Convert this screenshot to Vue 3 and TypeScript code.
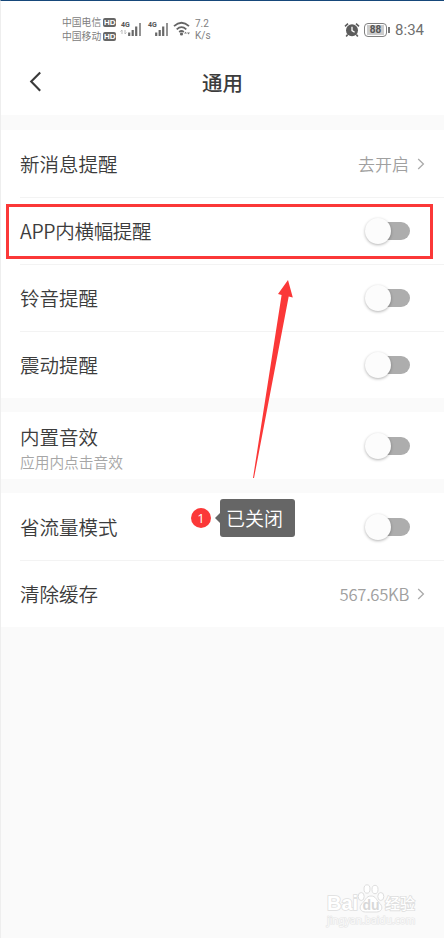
<script setup lang="ts">
interface Row {
  label: string
  note?: string
  value?: string
}

const sections: Row[][] = [
  [
    { label: '新消息提醒', value: '去开启' },
    { label: 'APP内横幅提醒' },
    { label: '铃音提醒' },
    { label: '震动提醒' },
  ],
  [{ label: '内置音效', note: '应用内点击音效' }],
  [{ label: '省流量模式' }, { label: '清除缓存', value: '567.65KB' }],
]

const carriers: string[] = ['中国电信', '中国移动']
const networks: number[] = [1, 2]
</script>

<template>
  <div class="screen">
    <header class="status">
      <div class="carriers">
        <div v-for="c in carriers" :key="c" class="carrier">
          <span>{{ c }}</span><b class="hd">HD</b>
        </div>
      </div>
      <div v-for="n in networks" :key="n" class="network">
        <span class="gen">4G</span>
        <svg width="24" height="18" viewBox="0 0 24 18">
          <path v-if="n === 1" d="M3 11v4M1.5 12.5L3 11M6 11v4M7.5 13.5L6 15" stroke="#bbb" stroke-width="1" fill="none" />
          <path d="M10.2 13.5v3.5M13.7 11v6M17.2 7.5v9.5" stroke="#686868" stroke-width="2.2" />
          <path d="M21 4V17" stroke="#888" stroke-width="1.8" />
        </svg>
      </div>
      <svg class="wifi" width="18" height="16" viewBox="0 0 18 16">
        <g fill="none" stroke="#656565" stroke-width="1.8">
          <path d="M1 5.2Q8.5-1.6 16 5.2M3.7 8.3Q8.5 4 13.3 8.3M6.2 11Q8.5 9 10.8 11" />
        </g>
        <circle cx="8.5" cy="13" r="1.6" fill="#656565" />
        <path d="M11 12.5l1.6-1.8 1.4 1.8zM14 11.5h3l-1.5 2z" fill="#777" />
      </svg>
      <div class="speed"><span>7.2</span><span>K/s</span></div>
      <div class="right">
        <svg width="16" height="16" viewBox="0 0 16 16">
          <circle cx="8" cy="8.2" r="6" fill="#5c5c5c" />
          <path d="M1 4.3L4 1.7M15 4.3L12 1.7M3.7 12.5L2.2 14.5M12.3 12.5l1.5 2" stroke="#5c5c5c" stroke-width="1.6" />
          <path d="M8 4.8v3.8l2.6 1.6" stroke="#fff" stroke-width="1.3" fill="none" />
        </svg>
        <div class="battery"><span>88</span></div>
        <i class="tip"></i>
        <span class="time">8:34</span>
      </div>
    </header>

    <nav class="title-bar">
      <svg width="14" height="22" viewBox="0 0 14 22">
        <path d="M12.2 1.5L3.2 10.5l9 9.2" fill="none" stroke="#3a3a3a" stroke-width="2.1" />
      </svg>
      <h1>通用</h1>
    </nav>

    <main>
      <section v-for="(rows, i) in sections" :key="i" class="group">
        <div v-for="row in rows" :key="row.label" class="row" :class="{ latin: row.label.startsWith('APP') }">
          <div class="text" :class="{ double: row.note }">
            <span class="label">{{ row.label }}</span>
            <span v-if="row.note" class="note">{{ row.note }}</span>
          </div>
          <div v-if="row.value" class="value">
            <span :class="{ size: row.value.endsWith('KB') }">{{ row.value }}</span>
            <svg width="8" height="12" viewBox="0 0 8 12">
              <path d="M1.2 1L6.4 6l-5.2 5" fill="none" stroke="#aaa" stroke-width="1.3" />
            </svg>
          </div>
          <div v-else class="toggle"><i class="knob"></i></div>
        </div>
      </section>
    </main>

    <div class="frame"></div>
    <svg class="pointer" width="44" height="202" viewBox="0 0 44 202">
      <path d="M36 1L40.8 18.4 36.7 17.4 2 199H1L29.6 16 26 15z" fill="#fb3838" />
    </svg>
    <div class="marker">1</div>
    <div class="tag">已关闭</div>

    <div class="watermark">
      <div class="brand">
        <span class="bai">Bai</span>
        <svg width="28" height="29" viewBox="0 0 28 29">
          <g fill="#fff" stroke="#dedede" stroke-width="1">
            <ellipse cx="4.2" cy="12.5" rx="3" ry="4" />
            <ellipse cx="10" cy="5" rx="3" ry="4.2" />
            <ellipse cx="18" cy="5.5" rx="3" ry="4.2" />
            <ellipse cx="23.8" cy="12.5" rx="3" ry="4" />
            <path d="M14 12c-5 0-5 4-9 7.5C1 24 4 28 8.5 28h11C24 28 27 24 23 19.5 19 16 19 12 14 12z" />
          </g>
          <text x="14" y="25.5" text-anchor="middle">du</text>
        </svg>
        <span class="jy">经验</span>
      </div>
      <div class="site">jingyan.baidu.com</div>
    </div>
  </div>
</template>

<style>
body {
  margin: 0;
  background: #fafafa;
}
</style>

<style scoped>
.screen {
  position: relative;
  box-sizing: border-box;
  width: 444px;
  height: 938px;
  overflow: hidden;
  border-top: 1px solid #16487a;
  border-left: 1px solid #eee;
  background: #fafafa;
  color: #3c3c3c;
  font-family: "Noto Sans CJK SC", sans-serif;
}
svg {
  display: block;
  flex: none;
}
.status {
  display: flex;
  height: 48px;
  padding: 10px 20px 0 61px;
  box-sizing: border-box;
  background: #fff;
  color: #808080;
}
.carriers {
  width: 57px;
  padding-top: 4px;
}
.carrier {
  display: flex;
  align-items: center;
  gap: 2px;
  height: 14px;
  font-size: 9.8px;
  line-height: 14px;
  white-space: nowrap;
}
.hd {
  width: 13px;
  height: 9px;
  border-radius: 2px;
  background: #666;
  color: #fff;
  font: bold 8px/9px "Liberation Sans", sans-serif;
  text-align: center;
}
.network {
  position: relative;
  width: 27px;
  padding-top: 8px;
}
.gen {
  position: absolute;
  top: 10px;
  left: 2px;
  color: #555;
  font: bold 7px/9px Roboto, sans-serif;
}
.wifi {
  margin: 10px 0 0 0;
}
.speed {
  display: flex;
  flex-direction: column;
  margin: 7px 0 0 4px;
  font: 10px/12px Roboto, sans-serif;
}
.right {
  display: flex;
  align-items: center;
  height: 16px;
  margin: 11px 0 0 auto;
}
.battery {
  box-sizing: border-box;
  width: 23px;
  height: 14px;
  margin-left: 4px;
  padding: 1px 2px;
  border: 1.5px solid #808080;
  border-radius: 4px;
}
.battery span {
  display: block;
  height: 10px;
  background: #ccc;
  color: #555;
  font: bold 10px/10px Roboto, sans-serif;
  text-align: center;
}
.tip {
  width: 2px;
  height: 6px;
  margin-left: 1px;
  background: #777;
}
.time {
  margin-left: 5px;
  color: #707070;
  font: 15px/16px Roboto, sans-serif;
}
.title-bar {
  display: flex;
  align-items: center;
  height: 66px;
  padding-left: 27px;
  background: #fff;
}
.title-bar h1 {
  flex: 1;
  margin: 0 41px 0 0;
  padding-bottom: 1px;
  text-align: center;
  font-size: 20.5px;
  font-weight: 500;
  line-height: 30px;
}
main {
  padding-top: 15px;
}
.group {
  margin-bottom: 14px;
  background: #fff;
}
.row {
  display: flex;
  align-items: center;
  justify-content: space-between;
  box-sizing: border-box;
  height: 67px;
  margin-left: 19px;
  padding-right: 19px;
}
.row + .row {
  border-top: 1px solid #f3f3f3;
}
.text {
  display: flex;
  flex-direction: column;
}
.double {
  padding-top: 4px;
}
.label {
  font-size: 19.5px;
  font-weight: 350;
  line-height: 28px;
}
.double .label {
  line-height: 27px;
}
.latin .label {
  letter-spacing: -0.3px;
}
.note {
  color: #a6a6a6;
  font-size: 14.7px;
  font-weight: 350;
  line-height: 23px;
}
.value {
  display: flex;
  align-items: center;
  gap: 8px;
  color: #a0a0a0;
  font-size: 17px;
  font-weight: 350;
  line-height: 26px;
}
.size {
  font-size: 16.7px;
  letter-spacing: -0.3px;
}
.toggle {
  display: flex;
  align-items: center;
  width: 36px;
  height: 18px;
  margin-right: 15px;
  border-radius: 9px;
  background: #adadad;
}
.knob {
  width: 26px;
  height: 26px;
  margin-left: -9px;
  border-radius: 50%;
  background: #fcfcfc;
  box-shadow: 0 1px 3px rgba(0, 0, 0, 0.3);
}
.frame {
  position: absolute;
  top: 203px;
  left: 5px;
  box-sizing: border-box;
  width: 427px;
  height: 55px;
  border: 3px solid #fb3838;
}
.pointer {
  position: absolute;
  top: 278px;
  left: 251px;
}
.marker {
  position: absolute;
  top: 507px;
  left: 190px;
  width: 20px;
  height: 20px;
  border-radius: 50%;
  background: #fb3838;
  color: #fff;
  font: 13px/20px "Open Sans", sans-serif;
  text-align: center;
}
.tag {
  position: absolute;
  top: 498px;
  left: 219px;
  box-sizing: border-box;
  width: 75px;
  height: 38px;
  padding-left: 6px;
  border-radius: 3px;
  background: #666;
  color: #fff;
  font-size: 19px;
  font-weight: 350;
  line-height: 37px;
}
.tag::before {
  content: "";
  position: absolute;
  top: 14px;
  left: -5px;
  border: 5px solid transparent;
  border-right-color: #666;
  border-left: 0;
}
.watermark {
  position: absolute;
  top: 882px;
  left: 326px;
  width: 92px;
  color: #fff;
}
.brand {
  display: flex;
  align-items: flex-end;
  height: 30px;
}
.bai,
.jy {
  paint-order: stroke fill;
  -webkit-text-stroke: 1.6px #dedede;
}
.bai {
  width: 30px;
  font: bold 20px/20px "Liberation Sans", sans-serif;
}
.brand text {
  fill: #d8d8d8;
  font: bold 14px "Liberation Sans", sans-serif;
}
.jy {
  font-size: 15px;
  font-weight: 500;
  line-height: 20px;
}
.site {
  color: #fafafa;
  font: 10.2px/14px "Noto Sans", sans-serif;
  paint-order: stroke fill;
  -webkit-text-stroke: 1.2px #e6e6e6;
}
</style>
